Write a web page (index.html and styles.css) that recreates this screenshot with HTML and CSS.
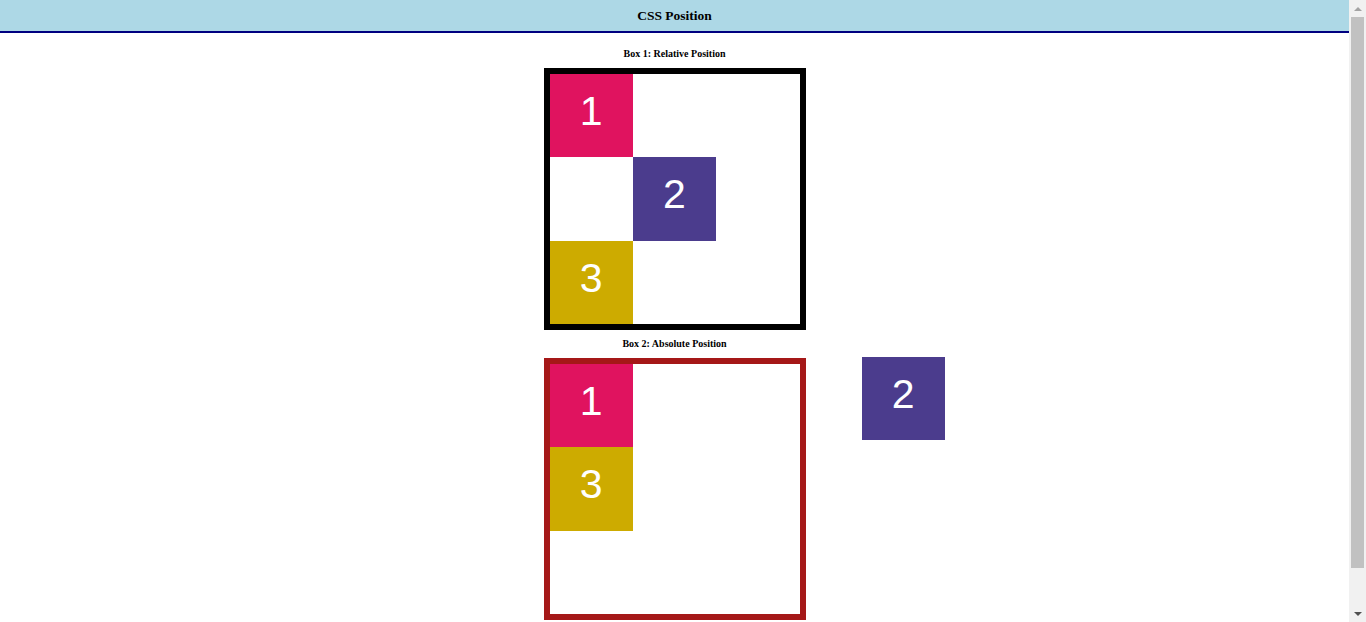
FILE: index.html
```html
<!DOCTYPE html>
<html>
<head>
<meta charset="utf-8">
<title>CSS Position</title>
<link rel="stylesheet" href="styles.css">
</head>
<body>
<div class="page">
  <header class="site-header">
    <h1 class="site-title">CSS Position</h1>
  </header>
  <main class="content">
    <h2 class="box-title">Box 1: Relative Position</h2>
    <div class="box box-relative">
      <div class="square pink">1</div>
      <div class="square purple shift">2</div>
      <div class="square gold">3</div>
    </div>
    <h2 class="box-title">Box 2: Absolute Position</h2>
    <div class="box box-absolute">
      <div class="square pink">1</div>
      <div class="square purple away">2</div>
      <div class="square gold">3</div>
    </div>
  </main>
</div>
<div class="scrollbar" aria-hidden="true">
  <div class="sb-button"><span class="sb-arrow-up"></span></div>
  <div class="sb-track"><div class="sb-thumb"></div></div>
  <div class="sb-button"><span class="sb-arrow-down"></span></div>
</div>
</body>
</html>
```
FILE: styles.css
```css
html, body {
  margin: 0;
  padding: 0;
  background: #ffffff;
  font-family: "Liberation Serif", "Times New Roman", serif;
}

.page {
  margin-right: 17px;
}

.site-header {
  background: #add8e6;
  border-bottom: 2px solid #000080;
  height: 31px;
  display: flex;
  align-items: center;
  justify-content: center;
}

.site-title {
  margin: 0;
  font-size: 13.5px;
  font-weight: bold;
  color: #000;
}

.content {
  display: flex;
  flex-direction: column;
  align-items: center;
  padding-top: 15px;
  padding-bottom: 46px;
}

.box-title {
  margin: 0 0 8px;
  font-size: 10px;
  line-height: 12px;
  font-weight: bold;
  color: #000;
}

.box {
  width: 250px;
  height: 250px;
  border: 6px solid #000;
  position: relative;
  margin-bottom: 8px;
}

.box-absolute {
  border-color: #a51818;
  margin-bottom: 0;
}

.square {
  box-sizing: border-box;
  width: 83.333px;
  height: 83.333px;
  display: flex;
  align-items: center;
  justify-content: center;
  padding-bottom: 8px;
  color: #fff;
  font-family: "Liberation Sans", Arial, sans-serif;
  font-size: 41px;
}

.pink { background: #e0135f; }
.purple { background: #4b3c8d; }
.gold { background: #cdab00; }

.shift {
  position: relative;
  left: 83.333px;
}

.away {
  position: absolute;
  left: 312px;
  top: -7px;
}

/* Browser scrollbar drawn over the right edge */
.scrollbar {
  position: fixed;
  top: 0;
  right: 0;
  width: 17px;
  height: 100vh;
  background: #f1f1f1;
  display: flex;
  flex-direction: column;
}

.sb-button {
  height: 17px;
  flex: none;
  display: flex;
  align-items: center;
  justify-content: center;
}

.sb-track {
  flex: 1;
  padding: 0 2px;
}

.sb-thumb {
  height: 551px;
  background: #c1c1c1;
}

.sb-arrow-up {
  width: 0;
  height: 0;
  border-left: 4px solid transparent;
  border-right: 4px solid transparent;
  border-bottom: 4px solid #a3a3a3;
}

.sb-arrow-down {
  width: 0;
  height: 0;
  border-left: 4px solid transparent;
  border-right: 4px solid transparent;
  border-top: 4px solid #505050;
}
```
